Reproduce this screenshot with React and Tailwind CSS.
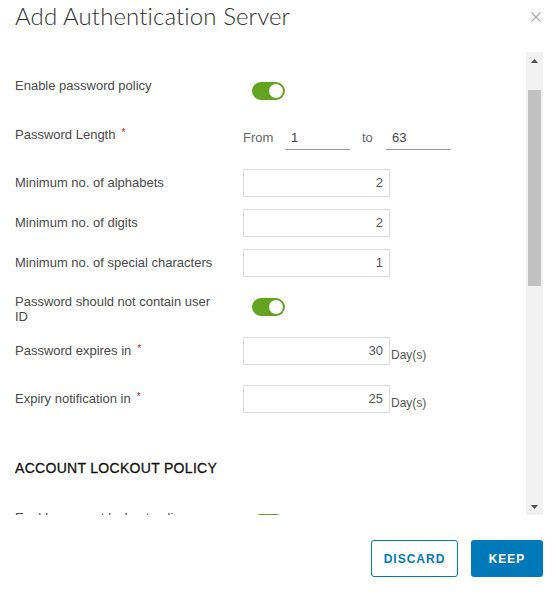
import React from "react";

const F = { fontFamily: '"Liberation Sans", Arial, sans-serif' };

function Toggle({ className = "" }) {
  return (
    <div className={`w-[33px] h-[18px] rounded-full bg-[#62a420] flex items-center justify-end pr-[2px] ${className}`}>
      <div className="w-[14px] h-[14px] rounded-full bg-white" />
    </div>
  );
}

function Req() {
  return <span className="text-[#c92100] text-[10px] ml-[6px] relative top-[-3px]">*</span>;
}

function NumInput({ value }) {
  return (
    <div className="w-[147px] h-[28px] border border-[#dddddd] flex items-center justify-end pr-[6px] text-[13px] text-[#565656]">
      {value}
    </div>
  );
}

export default function App() {
  return (
    <div className="w-[559px] h-[594px] bg-white flex flex-col overflow-hidden" style={F}>
      {/* header */}
      <div className="h-[52px] flex items-start justify-between pl-[15px] pr-[18px]">
        <div className="leading-none text-[#313131] mt-[4px]" style={{ fontFamily: '"Lato", "Liberation Sans", sans-serif', fontWeight: 300, fontSize: "24px", letterSpacing: "0.1px" }}>
          Add Authentication Server
        </div>
        <svg width="10" height="10" viewBox="0 0 10 10" className="mt-[12px]">
          <path d="M0.5 0.5 L9.5 9.5 M9.5 0.5 L0.5 9.5" stroke="#a8a8a8" strokeWidth="1.1" />
        </svg>
      </div>

      {/* body */}
      <div className="h-[463px] flex pr-[16px]">
        <div className="flex-1 overflow-hidden pl-[15px] text-[13px] text-[#4a4a4a]">
          {/* Row A */}
          <div className="mt-[25px] h-[24px] flex">
            <div className="w-[237px] leading-[18px]">Enable password policy</div>
            <Toggle className="mt-[5px]" />
          </div>
          {/* Row B */}
          <div className="mt-[25px] h-[24px] flex">
            <div className="w-[228px] leading-[18px]">
              Password Length<Req />
            </div>
            <div className="flex items-center h-[24px] text-[13px]">
              <span className="text-[#666] w-[42px]">From</span>
              <div className="w-[65px] h-[24px] border-b border-[#9a9a9a] flex items-center pl-[6px] text-[#454545]">1</div>
              <span className="text-[#666] ml-[12px] w-[24px]">to</span>
              <div className="w-[65px] h-[24px] border-b border-[#9a9a9a] flex items-center pl-[6px] text-[#454545]">63</div>
            </div>
          </div>
          {/* Row C */}
          <div className="mt-[19px] flex items-center">
            <div className="w-[228px]">Minimum no. of alphabets</div>
            <NumInput value="2" />
          </div>
          <div className="mt-[12px] flex items-center">
            <div className="w-[228px]">Minimum no. of digits</div>
            <NumInput value="2" />
          </div>
          <div className="mt-[12px] flex items-center">
            <div className="w-[228px]">Minimum no. of special characters</div>
            <NumInput value="1" />
          </div>
          {/* Row F */}
          <div className="mt-[17px] flex">
            <div className="w-[228px] pr-[20px] leading-[15px]">Password should not contain user ID</div>
            <Toggle className="mt-[4px] ml-[9px]" />
          </div>
          {/* Row G */}
          <div className="mt-[13px] flex items-center">
            <div className="w-[228px]">
              Password expires in<Req />
            </div>
            <NumInput value="30" />
            <span className="text-[12px] text-[#565656] ml-[1px] mt-[7px]">Day(s)</span>
          </div>
          <div className="mt-[20px] flex items-center">
            <div className="w-[228px]">
              Expiry notification in<Req />
            </div>
            <NumInput value="25" />
            <span className="text-[12px] text-[#565656] ml-[1px] mt-[7px]">Day(s)</span>
          </div>
          {/* Heading */}
          <div className="mt-[45px] leading-[20px] text-[14px] text-[#111111] tracking-[0.3px]" style={{ WebkitTextStroke: "0.3px #111111" }}>
            ACCOUNT LOCKOUT POLICY
          </div>
          <div className="mt-[31px] flex">
            <div className="w-[237px] leading-[18px]">Enable account lockout policy</div>
            <Toggle className="mt-[5px]" />
          </div>
        </div>
        {/* scrollbar */}
        <div className="w-[17px] bg-[#f1f1f1] flex flex-col items-center">
          <div className="h-[17px] w-full flex items-center justify-center">
            <svg width="7" height="4" viewBox="0 0 7 4"><path d="M3.5 0 L7 4 L0 4 Z" fill="#505050" /></svg>
          </div>
          <div className="mt-[21px] w-[13px] h-[196px] bg-[#c1c1c1]" />
          <div className="flex-1" />
          <div className="h-[17px] w-full flex items-center justify-center">
            <svg width="7" height="4" viewBox="0 0 7 4"><path d="M0 0 L7 0 L3.5 4 Z" fill="#505050" /></svg>
          </div>
        </div>
      </div>

      {/* footer */}
      <div className="flex justify-end gap-[13px] pr-[16px] mt-[25px]">
        <button className="w-[87px] h-[37px] border border-[#0079b8] rounded-[3px] text-[#0079b8] text-[12px] font-semibold tracking-[1px]">
          DISCARD
        </button>
        <button className="w-[72px] h-[37px] bg-[#0079b8] rounded-[3px] text-white text-[12px] font-semibold tracking-[1px]">
          KEEP
        </button>
      </div>
    </div>
  );
}
